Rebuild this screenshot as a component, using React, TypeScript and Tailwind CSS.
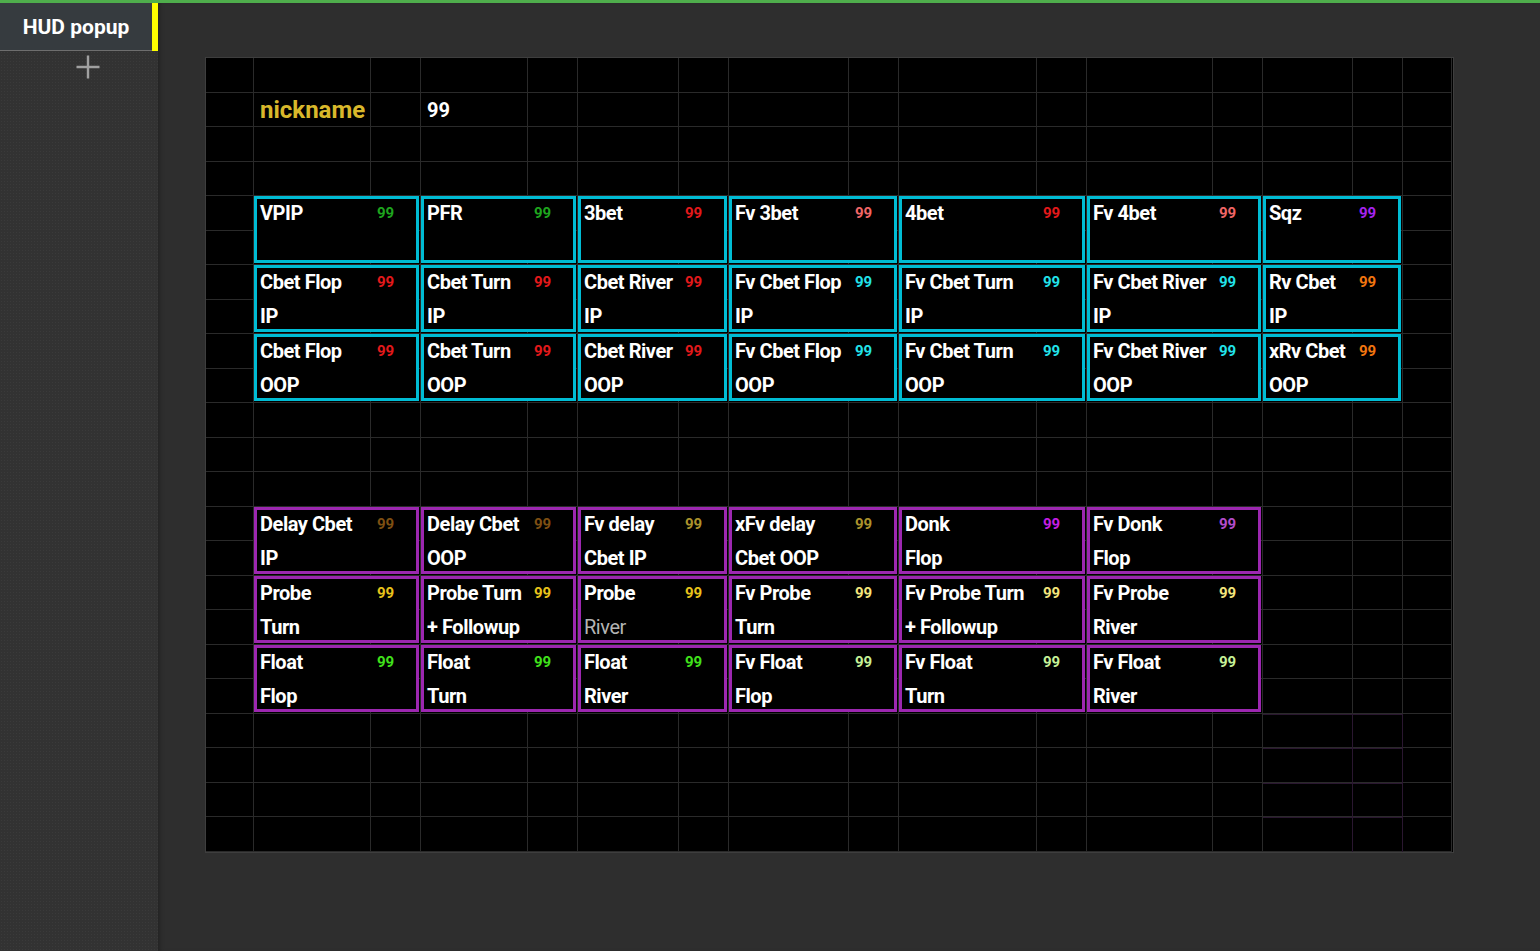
import { Fragment } from "react";

type Stat = {
  label: string;
  sub: string;
  color: string;
  pos: string;
  subStyle?: string;
};

// column templates shared by the background lines and the stat layer
const cols =
  "grid-cols-[48px_117px_50px_107px_50px_101px_50px_120px_50px_138px_50px_126px_50px_90px_50px_49px]";
const rows = "grid-rows-[repeat(23,34.5px)]";

const green = "text-[#1ea51e]";
const red = "text-[#e3191b]";
const salmon = "text-[#f06666]";
const violet = "text-[#a623ef]";
const cyan = "text-[#22e3ea]";
const orange = "text-[#f2760f]";
const brown = "text-[#7e4f12]";
const olive = "text-[#ab922c]";
const magenta = "text-[#c41ee3]";
const lilac = "text-[#b34ccb]";
const yellow = "text-[#e8c31b]";
const paleYellow = "text-[#f3e57c]";
const lime = "text-[#40e21b]";
const paleGreen = "text-[#c6f197]";

const cyanStats: Stat[] = [
  { label: "VPIP", sub: "", color: green, pos: "col-start-2 col-span-2 row-start-5 row-span-2" },
  { label: "PFR", sub: "", color: green, pos: "col-start-4 col-span-2 row-start-5 row-span-2" },
  { label: "3bet", sub: "", color: red, pos: "col-start-6 col-span-2 row-start-5 row-span-2" },
  { label: "Fv 3bet", sub: "", color: salmon, pos: "col-start-8 col-span-2 row-start-5 row-span-2" },
  { label: "4bet", sub: "", color: red, pos: "col-start-10 col-span-2 row-start-5 row-span-2" },
  { label: "Fv 4bet", sub: "", color: salmon, pos: "col-start-12 col-span-2 row-start-5 row-span-2" },
  { label: "Sqz", sub: "", color: violet, pos: "col-start-14 col-span-2 row-start-5 row-span-2" },

  { label: "Cbet Flop", sub: "IP", color: red, pos: "col-start-2 col-span-2 row-start-7 row-span-2" },
  { label: "Cbet Turn", sub: "IP", color: red, pos: "col-start-4 col-span-2 row-start-7 row-span-2" },
  { label: "Cbet River", sub: "IP", color: red, pos: "col-start-6 col-span-2 row-start-7 row-span-2" },
  { label: "Fv Cbet Flop", sub: "IP", color: cyan, pos: "col-start-8 col-span-2 row-start-7 row-span-2" },
  { label: "Fv Cbet Turn", sub: "IP", color: cyan, pos: "col-start-10 col-span-2 row-start-7 row-span-2" },
  { label: "Fv Cbet River", sub: "IP", color: cyan, pos: "col-start-12 col-span-2 row-start-7 row-span-2" },
  { label: "Rv Cbet", sub: "IP", color: orange, pos: "col-start-14 col-span-2 row-start-7 row-span-2" },

  { label: "Cbet Flop", sub: "OOP", color: red, pos: "col-start-2 col-span-2 row-start-9 row-span-2" },
  { label: "Cbet Turn", sub: "OOP", color: red, pos: "col-start-4 col-span-2 row-start-9 row-span-2" },
  { label: "Cbet River", sub: "OOP", color: red, pos: "col-start-6 col-span-2 row-start-9 row-span-2" },
  { label: "Fv Cbet Flop", sub: "OOP", color: cyan, pos: "col-start-8 col-span-2 row-start-9 row-span-2" },
  { label: "Fv Cbet Turn", sub: "OOP", color: cyan, pos: "col-start-10 col-span-2 row-start-9 row-span-2" },
  { label: "Fv Cbet River", sub: "OOP", color: cyan, pos: "col-start-12 col-span-2 row-start-9 row-span-2" },
  { label: "xRv Cbet", sub: "OOP", color: orange, pos: "col-start-14 col-span-2 row-start-9 row-span-2" },
];

const purpleStats: Stat[] = [
  { label: "Delay Cbet", sub: "IP", color: brown, pos: "col-start-2 col-span-2 row-start-14 row-span-2" },
  { label: "Delay Cbet", sub: "OOP", color: brown, pos: "col-start-4 col-span-2 row-start-14 row-span-2" },
  { label: "Fv delay", sub: "Cbet IP", color: olive, pos: "col-start-6 col-span-2 row-start-14 row-span-2" },
  { label: "xFv delay", sub: "Cbet OOP", color: olive, pos: "col-start-8 col-span-2 row-start-14 row-span-2" },
  { label: "Donk", sub: "Flop", color: magenta, pos: "col-start-10 col-span-2 row-start-14 row-span-2" },
  { label: "Fv Donk", sub: "Flop", color: lilac, pos: "col-start-12 col-span-2 row-start-14 row-span-2" },

  { label: "Probe", sub: "Turn", color: yellow, pos: "col-start-2 col-span-2 row-start-16 row-span-2" },
  { label: "Probe Turn", sub: "+ Followup", color: yellow, pos: "col-start-4 col-span-2 row-start-16 row-span-2" },
  { label: "Probe", sub: "River", color: yellow, pos: "col-start-6 col-span-2 row-start-16 row-span-2", subStyle: "text-[#b4b4b4] font-normal" },
  { label: "Fv Probe", sub: "Turn", color: paleYellow, pos: "col-start-8 col-span-2 row-start-16 row-span-2" },
  { label: "Fv Probe Turn", sub: "+ Followup", color: paleYellow, pos: "col-start-10 col-span-2 row-start-16 row-span-2" },
  { label: "Fv Probe", sub: "River", color: paleYellow, pos: "col-start-12 col-span-2 row-start-16 row-span-2" },

  { label: "Float", sub: "Flop", color: lime, pos: "col-start-2 col-span-2 row-start-18 row-span-2" },
  { label: "Float", sub: "Turn", color: lime, pos: "col-start-4 col-span-2 row-start-18 row-span-2" },
  { label: "Float", sub: "River", color: lime, pos: "col-start-6 col-span-2 row-start-18 row-span-2" },
  { label: "Fv Float", sub: "Flop", color: paleGreen, pos: "col-start-8 col-span-2 row-start-18 row-span-2" },
  { label: "Fv Float", sub: "Turn", color: paleGreen, pos: "col-start-10 col-span-2 row-start-18 row-span-2" },
  { label: "Fv Float", sub: "River", color: paleGreen, pos: "col-start-12 col-span-2 row-start-18 row-span-2" },
];

const StatBox = ({ s, frame }: { s: Stat; frame: string }) => (
  <div className={`${s.pos} ${frame} mr-[2px] mb-[2px] border-[3px] bg-black flex flex-col justify-between pl-[3px] pt-[4px] pb-[3px]`}>
    <div className="flex items-center h-[20px]">
      <span className="flex-1 text-[20px] leading-[20px] font-bold text-white whitespace-nowrap tracking-[-0.45px]">
        {s.label}
      </span>
      <span className={`w-[39px] text-[15px] leading-[20px] font-bold ${s.color}`}>99</span>
    </div>
    <div
      className={`h-[20px] text-[20px] leading-[20px] whitespace-nowrap tracking-[-0.45px] ${
        s.subStyle ?? "text-white font-bold"
      }`}
    >
      {s.sub}
    </div>
  </div>
);

const PlusIcon = () => (
  <svg width="24" height="24" viewBox="0 0 24 24" fill="none" stroke="#a0a0a0" strokeWidth="2.4">
    <path d="M12 0.5v23M0.5 12h23" />
  </svg>
);

const App = () => {
  return (
    <div className="h-[951px] w-full flex flex-col bg-[#2e2e2e] font-['Roboto',sans-serif] overflow-hidden">
      {/* top accent line */}
      <div className="h-[3px] w-full bg-[#4fae4c]" />

      <div className="flex flex-1">
        {/* sidebar */}
        <div className="w-[158px] bg-[#323232] bg-[radial-gradient(#3a3a3a_1px,transparent_1px)] bg-[size:3px_3px] flex flex-col">
          <div className="flex h-[48px]">
            <div className="w-[152px] bg-[#363b3f] border-b border-[#6e6e6e] flex items-center justify-center pt-[3px] text-white text-[21px] font-bold">
              HUD popup
            </div>
            <div className="w-[6px] bg-[#ffff00]" />
          </div>
          <div className="pl-[76px] pt-[4px]">
            <PlusIcon />
          </div>
        </div>

        {/* editor area */}
        <div className="flex-1 bg-[#2e2e2e] shadow-[inset_4px_0_4px_-2px_rgba(0,0,0,0.25)] pl-[47px] pt-[54px]">
          <div className="relative w-[1249px] border border-[#3e3e3e] bg-black">
            {/* background grid lines */}
            <div className={`grid ${cols} ${rows}`}>
              {Array.from({ length: 23 * 16 }).map((_, i) => (
                <div key={i} className="border-r border-b border-[#2a2a2a]" />
              ))}
            </div>

            {/* widgets on the canvas */}
            <div className={`absolute inset-0 grid ${cols} ${rows}`}>
              <div className="col-start-2 col-span-2 row-start-2 flex items-center pl-[6px] text-[24px] font-bold text-[#d9b82b]">
                nickname
              </div>
              <div className="col-start-4 row-start-2 flex items-center pl-[6px] text-[20px] font-bold text-white">
                99
              </div>

              {cyanStats.map((s, i) => (
                <Fragment key={"c" + i}>
                  <StatBox s={s} frame="border-[#00bcd4]" />
                </Fragment>
              ))}
              {purpleStats.map((s, i) => (
                <Fragment key={"p" + i}>
                  <StatBox s={s} frame="border-[#9c27b0]" />
                </Fragment>
              ))}

              {/* faint hidden widget outline */}
              <div className="col-start-14 col-span-2 row-start-20 row-span-4 grid grid-cols-[90px_50px] grid-rows-[repeat(4,34.5px)]">
                {Array.from({ length: 8 }).map((_, i) => (
                  <div key={i} className="border-t border-r border-[#2a1730]" />
                ))}
              </div>
            </div>
          </div>
        </div>
      </div>
    </div>
  );
};

export default App;
